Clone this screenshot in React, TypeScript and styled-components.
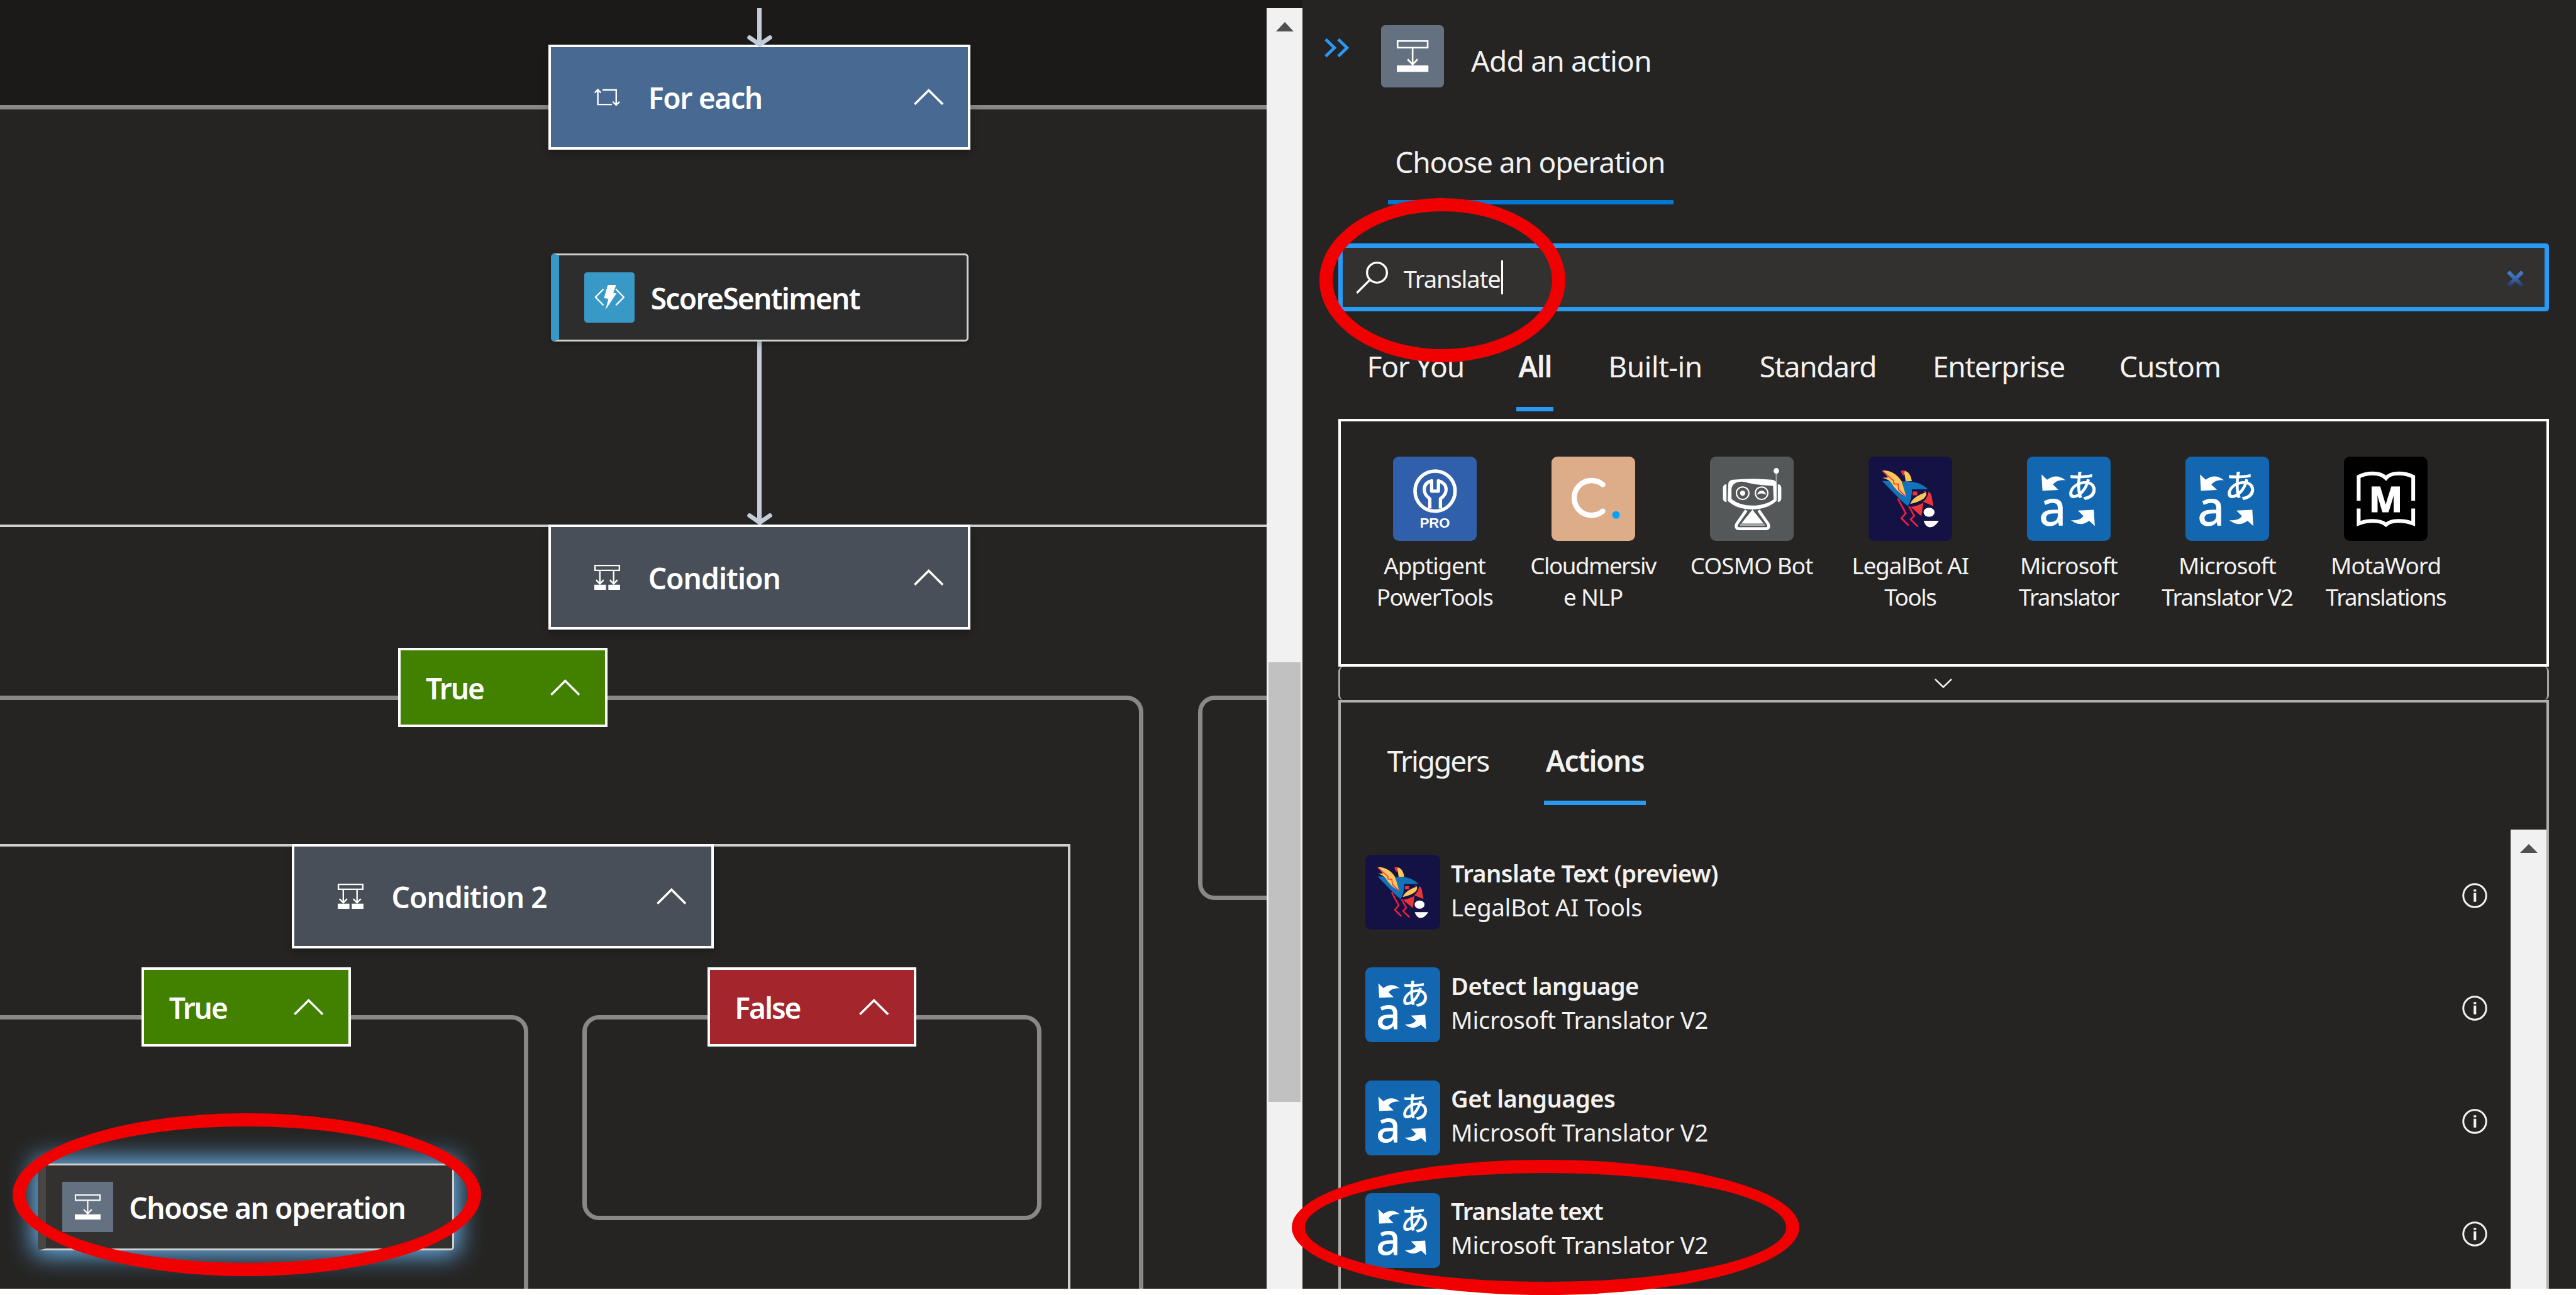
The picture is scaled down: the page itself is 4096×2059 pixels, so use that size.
import React from "react";
import styled, { createGlobalStyle, css } from "styled-components";

/* 1rem is one hundredth of the 4400-unit wide design grid. */
const GlobalStyle = createGlobalStyle`
  html { font-size: calc(100vw / 44); }
  body {
    margin: 0;
    background: #fff;
    overflow: hidden;
    color: #f3f2f1;
    font-family: "Noto Sans", "Open Sans", "Noto Sans CJK JP", sans-serif;
  }
  *, *::before, *::after { box-sizing: border-box; }
  svg { display: block; flex: none; overflow: visible; }
`;

const Page = styled.div`
  position: relative;
  width: 44rem;
  height: 22.12rem;
  overflow: hidden;
  background: #fff;
`;

const Workspace = styled.div`
  display: flex;
  height: 22.01rem;
`;

/* ---------- text ---------- */

const Label = styled.span<{ $track?: number; $bold?: boolean }>`
  display: block;
  margin-bottom: -0.022rem;
  padding-top: 0.022rem;
  white-space: pre;
  font-size: 0.495rem;
  line-height: 0.6rem;
  font-weight: ${(p) => (p.$bold ? 600 : 400)};
  letter-spacing: ${(p) => p.$track ?? -0.024}em;
`;

const SmallLabel = styled(Label)`
  margin-bottom: 0;
  padding-top: 0;
  font-size: 0.41rem;
  line-height: 0.58rem;
`;

/* ---------- designer canvas ---------- */

const Canvas = styled.main`
  position: relative;
  flex: none;
  width: 21.64rem;
  overflow: hidden;
  background: #1b1a19;
  color: #fff;
`;

type Box = { $x: number; $y: number; $w: number; $h: number };

const placed = css<Box>`
  position: absolute;
  left: ${(p) => p.$x}rem;
  top: ${(p) => p.$y}rem;
  width: ${(p) => p.$w}rem;
  height: ${(p) => p.$h}rem;
`;

const ScopeFrame = styled.div<Box & { $square?: boolean }>`
  ${placed}
  border: ${(p) => (p.$square ? "0.0435rem solid #d2d0ce" : "0.076rem solid #8a8886")};
  border-radius: ${(p) => (p.$square ? 0 : "0.28rem")};
  background: #252423;
`;

const EdgeLine = styled.div<Box>`
  ${placed}
  background: #c5ccd9;
`;

const ArrowHead = styled.svg<{ $x: number; $y: number }>`
  position: absolute;
  left: ${(p) => p.$x}rem;
  top: ${(p) => p.$y}rem;
  width: 0.43rem;
  height: 0.2rem;
`;

const ScopeCard = styled.section<Box & { $fill: string }>`
  ${placed}
  display: flex;
  align-items: center;
  padding: 0 0.42rem 0 0.735rem;
  border: 0.0435rem solid #fff;
  background: ${(p) => p.$fill};
  box-shadow: 0 0.06rem 0.12rem rgba(0, 0, 0, 0.25);
`;

const ScopeTitle = styled(Label)`
  flex: 1;
  padding-left: 0.482rem;
`;

const BranchCard = styled.section<Box & { $fill: string }>`
  ${placed}
  display: flex;
  align-items: center;
  justify-content: space-between;
  padding: 0 0.42rem 0 0.425rem;
  border: 0.0435rem solid #fff;
  background: ${(p) => p.$fill};
`;

const ActionCard = styled.section<Box & { $accent: string; $fill: string; $selected?: boolean }>`
  ${placed}
  display: flex;
  align-items: center;
  border: 0.033rem solid #d2d0ce;
  border-left: 0.14rem solid ${(p) => p.$accent};
  border-radius: 0.06rem;
  background: ${(p) => p.$fill};
  box-shadow: ${(p) => (p.$selected ? "0 0 0.42rem 0.07rem #6cb8f6" : "0 0.04rem 0.1rem rgba(0,0,0,0.25)")};
`;

const CardTile = styled.div<{ $fill: string; $gap: number; $radius?: number }>`
  display: flex;
  align-items: center;
  justify-content: center;
  flex: none;
  width: 0.862rem;
  height: 0.862rem;
  margin-left: ${(p) => p.$gap}rem;
  border-radius: ${(p) => p.$radius ?? 0}rem;
  background: ${(p) => p.$fill};
`;

const CardTitle = styled(Label)`
  padding-left: 0.275rem;
`;

/* ---------- scrollbars ---------- */

const CanvasScroll = styled.div`
  display: flex;
  flex-direction: column;
  flex: none;
  width: 0.61rem;
  border-top: 0.14rem solid #1b1a19;
  background: #f1f1f1;
`;

const ScrollArrow = styled.svg<{ $top: number; $h: number }>`
  width: 0.3rem;
  height: ${(p) => p.$h}rem;
  margin: ${(p) => p.$top}rem auto 0;
`;

const Thumb = styled.div`
  height: 7.506rem;
  margin: 10.77rem 0.04rem 0 0.03rem;
  background: #c1c1c1;
`;

const ListScroll = styled.div`
  flex: none;
  width: 0.605rem;
  background: #f1f1f1;
`;

/* ---------- side panel ---------- */

const Panel = styled.aside`
  display: flex;
  flex-direction: column;
  flex: 1;
  padding: 0 0.465rem 0 0.61rem;
  background: #252423;
`;

const PanelHeader = styled.header`
  display: flex;
  align-items: flex-start;
  height: 1.5rem;
  margin-left: -0.235rem;
`;

const CollapseIcon = styled.svg`
  width: 0.42rem;
  height: 0.32rem;
  margin-top: 0.66rem;
`;

const HeaderTile = styled.div`
  display: flex;
  align-items: center;
  justify-content: center;
  width: 1.078rem;
  height: 1.07rem;
  margin: 0.427rem 0 0 0.543rem;
  border-radius: 0.07rem;
  background: #647180;
`;

const PanelTitle = styled(Label)`
  margin: 0.72rem 0 0 0.464rem;
`;

const OperationTab = styled.div`
  width: 4.88rem;
  margin: 0.948rem 0 0 0.843rem;
  padding: 0 0 0.372rem 0.125rem;
  border-bottom: 0.08rem solid #0078d4;
`;

const SearchBox = styled.div`
  display: flex;
  align-items: center;
  height: 1.155rem;
  margin-top: 0.667rem;
  padding: 0 0.35rem 0 0.225rem;
  border: 0.08rem solid #2899f5;
  border-radius: 0.05rem;
  background: #323130;
`;

const SearchText = styled(SmallLabel)`
  padding: 0.03rem 0 0 0.263rem;
  font-size: 0.41rem;
`;

const Caret = styled.span`
  width: 0.033rem;
  height: 0.575rem;
  margin-left: 0.012rem;
  background: #fff;
`;

const ClearIcon = styled.svg`
  width: 0.29rem;
  height: 0.29rem;
  margin: 0.05rem 0 0 auto;
`;

const CategoryTabs = styled.nav`
  display: grid;
  grid-template-columns: 2.587rem 1.537rem 2.583rem 2.955rem 3.19rem auto;
  margin: 0.62rem 0 0 0.458rem;
`;

const Tab = styled.div<{ $active?: boolean; $drop: number }>`
  justify-self: start;
  padding: 0 0.03rem ${(p) => p.$drop}rem 0.03rem;
  border-bottom: 0.076rem solid ${(p) => (p.$active ? "#2899f5" : "transparent")};
`;

const Connectors = styled.div`
  display: grid;
  grid-template-columns: repeat(7, 2.708rem);
  align-content: start;
  height: 4.24rem;
  margin-top: 0.125rem;
  padding: 0.61rem 0 0 0.247rem;
  border: 0.0435rem solid #fff;
`;

const Connector = styled.div`
  display: flex;
  flex-direction: column;
  align-items: center;
`;

const ConnectorTile = styled.div<{ $fill: string; $size: number }>`
  flex: none;
  width: ${(p) => p.$size}rem;
  height: ${(p) => p.$size}rem;
  overflow: hidden;
  border-radius: 0.1rem;
  background: ${(p) => p.$fill};

  svg { width: 100%; height: 100%; }
`;

const ConnectorName = styled.div`
  margin-top: 0.143rem;
`;

const ConnectorLine = styled(Label)`
  font-size: 0.395rem;
  line-height: 0.535rem;
  text-align: center;
`;

const Expander = styled.div`
  display: flex;
  align-items: center;
  justify-content: center;
  height: 0.57rem;
  border: solid #a7a5a3;
  border-width: 0 0.033rem;
  border-radius: 0.08rem;
`;

const Operations = styled.section`
  display: flex;
  flex-direction: column;
  flex: 1;
  border: solid #b0aead;
  border-width: 0.0435rem 0.0435rem 0;
`;

const OperationTabs = styled.nav`
  display: grid;
  grid-template-columns: 2.708rem auto;
  margin: 0.67rem 0 0 0.763rem;
`;

const OperationBody = styled.div`
  display: flex;
  flex: 1;
  margin-top: 0.42rem;
`;

const OperationList = styled.div`
  flex: 1;
  padding: 0.112rem 0.4rem 0 0.422rem;
`;

const OperationRow = styled.div`
  display: flex;
  align-items: center;
  height: 1.925rem;
`;

const OperationText = styled.div`
  flex: 1;
  padding: 0 0 0.09rem 0.178rem;
`;

const InfoIcon = styled.svg`
  width: 0.43rem;
  height: 0.43rem;
  margin-top: 0.12rem;
`;

const Highlight = styled.div<Box>`
  ${placed}
  border: 0.23rem solid #f00000;
  border-radius: 50%;
  pointer-events: none;
`;

/* ---------- line icons ---------- */

const size = (w: number, h: number) => ({ viewBox: `0 0 ${w} ${h}`, style: { width: `${w / 100}rem`, height: `${h / 100}rem` } });

const ChevronUp = () => (
  <svg {...size(51, 28)} fill="none" stroke="#fff" strokeWidth="3.8">
    <path d="M1.5 26.5 25.5 2.8 49.5 26.5" />
  </svg>
);

const ChevronDown = () => (
  <svg {...size(30, 16)} fill="none" stroke="#f3f2f1" strokeWidth="2.8">
    <path d="M1 1 15 14.5 29 1" />
  </svg>
);

const LoopIcon = () => (
  <svg {...size(44, 29)} fill="none" stroke="#fff" strokeWidth="2.6">
    <path d="M14 2.2H37.4V27.5M30 27H6V2M.8 7 6 1.6 11.2 7M31.5 22.3 37.4 28 43 22.3" />
  </svg>
);

const ConditionIcon = () => (
  <svg {...size(44, 43)} fill="none" stroke="#fff" strokeWidth="2.5">
    <path d="M1.2 1.2H42.8V9.6H1.2ZM9.5 10V32M33 10V32M3 26 9.5 32.5 16 26M26.5 26 33 32.5 39.5 26" />
    <path d="M0 34H20V43H0ZM24 34H44V43H24Z" fill="#fff" stroke="none" />
  </svg>
);

const StepIcon = ({ large }: { large?: boolean }) => (
  <svg {...size(large ? 54 : 44, large ? 54 : 43)} viewBox="0 0 54 54" preserveAspectRatio="none" fill="none" stroke="#fff" strokeWidth="2.8">
    <path d="M1.3 1.3H52.7V12.7H1.3ZM27 13V41M18.5 32.5 27 41.5 35.5 32.5" />
    <path d="M0 43H54V54H0Z" fill="#fff" stroke="none" />
  </svg>
);

const FunctionIcon = () => (
  <svg {...size(86, 86)}>
    <path d="M32.7 28.7 19.2 42.5 32.7 56.3M54 28.7 67.6 42.5 54 56.3" fill="none" stroke="#fff" strokeWidth="2.4" />
    <path d="M40.3 21.4H54.6L49.5 34.8 55.2 36 36.2 64 41.3 45.2 33.7 44Z" fill="#fff" />
  </svg>
);

const SearchIcon = () => (
  <svg {...size(55, 55)} fill="none" stroke="#fff" strokeWidth="3.6">
    <circle cx="36" cy="18.8" r="17" />
    <path d="M24 31 1.5 53.5" />
  </svg>
);

const Arrow = ({ x, y }: { x: number; y: number }) => (
  <ArrowHead $x={x} $y={y} viewBox="0 0 43 20" fill="none" stroke="#c5ccd9" strokeWidth="7.5" strokeLinecap="round" strokeLinejoin="round">
    <path d="M4 4 21.5 16 39 4" />
  </ArrowHead>
);

const Info = () => (
  <InfoIcon viewBox="0 0 43 43" fill="none" stroke="#f3f2f1">
    <circle cx="21.5" cy="21.5" r="19.6" strokeWidth="3.2" />
    <path d="M21.8 16.8V32M21.8 11V14.4" strokeWidth="4.4" />
  </InfoIcon>
);

/* ---------- connector logos ---------- */

const ApptigentLogo = () => (
  <svg viewBox="0 0 142 142" fill="none" stroke="#fff">
    <circle cx="71.3" cy="58.5" r="34" strokeWidth="6" />
    <path
      strokeWidth="5.6"
      strokeLinejoin="round"
      d="M62.4 88V71.5C56 67 53 62 53 55.5 53 48 58 43 65.5 41V58.5H77V41C84.5 43 90 48 90 55.5 90 62 87 67 80.4 71.5V88"
    />
    <text x="71" y="121" textAnchor="middle" fontSize="23.5" fontWeight="700" fontFamily='"Liberation Sans", sans-serif' fill="#fff" stroke="none" textLength="51" lengthAdjust="spacingAndGlyphs">
      PRO
    </text>
  </svg>
);

const CloudmersiveLogo = () => (
  <svg viewBox="0 0 142 142">
    <path d="M87 47.5A29.5 29.5 0 1 0 87 92.5" fill="none" stroke="#fff" strokeWidth="9" strokeLinecap="round" />
    <circle cx="109.4" cy="99" r="6.4" fill="#00a2ff" />
  </svg>
);

const CosmoLogo = () => (
  <svg viewBox="0 0 142 142">
    <path d="M112.5 28V46" stroke="#a9abab" strokeWidth="2" />
    <ellipse cx="112.5" cy="24.3" rx="4.6" ry="5" fill="#fff" />
    <path d="M28 47C23.5 47 22 50 22 54V70C22 74 23.5 77 28 77ZM115 47C119.5 47 121 50 121 54V70C121 74 119.5 77 115 77Z" fill="#fff" />
    <path d="M31 48C31 42 34 40 39 39.3Q72 36 105 39.3C110 40 113 42 113 48V75Q98 89.5 72 89.5 45 89.5 30 75Z" fill="#fff" />
    <path d="M36.5 55C37 47 44 42.3 54 42.3 62 42.3 68 48 107 49.5L108 72.5Q94 83 72 83 50 83 36.5 72Z" fill="#555858" />
    <circle cx="55.4" cy="62" r="10.6" fill="none" stroke="#fff" strokeWidth="2.2" />
    <circle cx="55.4" cy="62" r="4.4" fill="#fff" />
    <circle cx="87.5" cy="62" r="10.6" fill="none" stroke="#fff" strokeWidth="2.2" />
    <path d="M80 64.5Q82 57.5 87.5 57.5 93 57.5 95 64.5 87.5 60.5 80 64.5Z" fill="#fff" />
    <path d="M61.5 91 45.5 114C43 120 45 122.3 50 122.3H94C99 122.3 101 120 98.5 114L82.5 91" fill="none" stroke="#fff" strokeWidth="5" />
    <path d="M72 90 91 113.5H53Z" fill="#fff" />
    <path d="M51 116H93" stroke="#fff" strokeWidth="1.5" />
  </svg>
);

const LegalBotLogo = () => (
  <svg viewBox="36 31 427 427">
    <path d="M106 155H152L214 232 210 158Q290 150 340 198H258Q256 262 235 283L200 252Z" fill="#1173ba" />
    <path d="M108 102Q168 100 206 158L229 238Q176 208 152 165 138 145 106 139L136 138Z" fill="#fdc75a" />
    <path d="M107 104 164 154 166 170 187 171 190 199 227 236" fill="none" stroke="#ee3344" strokeWidth="5.5" />
    <path d="M215 102Q250 106 257 156L226 157Q222 130 215 102Z" fill="#fcc850" />
    <path d="M202 102H222L215 129Q202 118 202 102Z" fill="#e8323a" />
    <path d="M262 209H285V228H262ZM318 204 330 210 324 216Z" fill="#ec343c" />
    <path d="M343 208Q355 218 358 232L367 284 314 261Q338 244 343 208ZM316 266 306 335 251 288Q284 284 316 266Z" fill="#ec353b" />
    <path d="M249 272Q262 236 330 212 340 252 249 272Z" fill="#fdc75a" />
    <path d="M186 245 226 320 204 345 241 382M242 284 269 333 251 352 288 388" fill="none" stroke="#f01c40" strokeWidth="9" />
    <ellipse cx="345" cy="315" rx="28" ry="23.5" fill="#fff" />
    <path d="M317 358H395Q374 391 350 391.5 329 391 317 358Z" fill="#fff" />
  </svg>
);

const TranslatorLogo = () => (
  <svg viewBox="849 31 427 427" fill="#fff">
    <path d="M923 122 952 149Q998 114 1045 151 1004 146 981 173L1010 201 928 205Z" />
    <path d="M1109 306 1190 302 1195 385 1166 358Q1120 393 1073 355 1120 360 1137 334Z" />
    <text x="911" y="381" fontSize="247" stroke="#fff" strokeWidth="3">
      a
    </text>
    <text x="1048" y="243" fontSize="166" fontWeight="500" fontFamily='"Noto Sans CJK JP", sans-serif'>
      あ
    </text>
  </svg>
);

const MotaWordLogo = () => (
  <svg viewBox="0 0 142 142">
    <path
      d="M25 75V34Q36 28.5 49 28.5 64 28.5 71.3 36.5 78 28.5 93 28.5 106 28.5 117.5 34V75M25 88V113.5Q36 109 49 109 64 109 71.3 115.5 78 109 93 109 106 109 117.5 113.5V88"
      fill="none"
      stroke="#fff"
      strokeWidth="6.4"
    />
    <text x="71" y="94" textAnchor="middle" fontSize="59" fontWeight="800" fill="#fff" stroke="#fff" strokeWidth="1" textLength="57" lengthAdjust="spacingAndGlyphs">
      M
    </text>
  </svg>
);

/* ---------- data ---------- */

type Line = [text: string, track: number];

const connectors: { fill: string; logo: React.ReactNode; lines: Line[] }[] = [
  { fill: "#305fab", logo: <ApptigentLogo />, lines: [["Apptigent", -0.028], ["PowerTools", -0.036]] },
  { fill: "#ddac88", logo: <CloudmersiveLogo />, lines: [["Cloudmersiv", -0.041], ["e NLP", -0.03]] },
  { fill: "#555858", logo: <CosmoLogo />, lines: [["COSMO Bot", -0.023]] },
  { fill: "#141244", logo: <LegalBotLogo />, lines: [["LegalBot AI", -0.03], ["Tools", -0.04]] },
  { fill: "#1267b0", logo: <TranslatorLogo />, lines: [["Microsoft", -0.024], ["Translator", -0.043]] },
  { fill: "#1267b0", logo: <TranslatorLogo />, lines: [["Microsoft", -0.024], ["Translator V2", -0.04]] },
  { fill: "#000", logo: <MotaWordLogo />, lines: [["MotaWord", -0.024], ["Translations", -0.042]] },
];

const categories: { name: string; track: number; active?: boolean }[] = [
  { name: "For You", track: -0.026 },
  { name: "All", track: -0.03, active: true },
  { name: "Built-in", track: -0.013 },
  { name: "Standard", track: -0.031 },
  { name: "Enterprise", track: -0.028 },
  { name: "Custom", track: -0.022 },
];

const operations: { title: Line; source: Line; fill: string; logo: React.ReactNode }[] = [
  { title: ["Translate Text (preview)", -0.017], source: ["LegalBot AI Tools", -0.0055], fill: "#141244", logo: <LegalBotLogo /> },
  { title: ["Detect language", -0.014], source: ["Microsoft Translator V2", -0.007], fill: "#1267b0", logo: <TranslatorLogo /> },
  { title: ["Get languages", -0.0145], source: ["Microsoft Translator V2", -0.007], fill: "#1267b0", logo: <TranslatorLogo /> },
  { title: ["Translate text", -0.0267], source: ["Microsoft Translator V2", -0.007], fill: "#1267b0", logo: <TranslatorLogo /> },
];

/* ---------- composition ---------- */

const Branch = ({ x, y, fill, name, track }: { x: number; y: number; fill: string; name: string; track: number }) => (
  <BranchCard $x={x} $y={y} $w={3.57} $h={1.355} $fill={fill}>
    <Label $bold $track={track}>
      {name}
    </Label>
    <ChevronUp />
  </BranchCard>
);

const Scope = ({ x, y, fill, name, track, icon }: { x: number; y: number; fill: string; name: string; track: number; icon: React.ReactNode }) => (
  <ScopeCard $x={x} $y={y} $w={7.205} $h={1.787} $fill={fill}>
    {icon}
    <ScopeTitle $bold $track={track}>
      {name}
    </ScopeTitle>
    <ChevronUp />
  </ScopeCard>
);

const Designer = () => (
  <Canvas>
    <ScopeFrame $x={-1} $y={1.795} $w={24} $h={22} />
    <ScopeFrame $square $x={-1} $y={8.963} $w={24} $h={15} />
    <ScopeFrame $x={-1} $y={11.883} $w={20.53} $h={12} />
    <ScopeFrame $x={20.46} $y={11.883} $w={4} $h={3.494} />
    <ScopeFrame $square $x={-1} $y={14.414} $w={19.285} $h={9} />
    <ScopeFrame $x={-1} $y={17.34} $w={10.018} $h={6} />
    <ScopeFrame $x={9.943} $y={17.34} $w={7.846} $h={3.496} />

    <EdgeLine $x={12.933} $y={0.145} $w={0.077} $h={0.6} />
    <EdgeLine $x={12.933} $y={5.83} $w={0.077} $h={3.08} />
    <Scope x={9.372} y={0.765} fill="#486991" name="For each" track={-0.0283} icon={<LoopIcon />} />
    <Scope x={9.372} y={8.963} fill="#484f58" name="Condition" track={-0.0202} icon={<ConditionIcon />} />
    <Scope x={4.987} y={14.414} fill="#484f58" name="Condition 2" track={-0.0193} icon={<ConditionIcon />} />
    <Arrow x={12.757} y={0.6} />
    <Arrow x={12.757} y={8.767} />

    <ActionCard $x={9.408} $y={4.33} $w={7.132} $h={1.5} $accent="#3999c6" $fill="#2d2d2d">
      <CardTile $fill="#3999c6" $gap={0.43} $radius={0.05}>
        <FunctionIcon />
      </CardTile>
      <CardTitle $bold $track={-0.0366}>
        ScoreSentiment
      </CardTitle>
    </ActionCard>

    <Branch x={6.805} y={11.063} fill="#428000" name="True" track={-0.045} />
    <Branch x={2.42} y={16.522} fill="#428000" name="True" track={-0.045} />
    <Branch x={12.082} y={16.522} fill="#a4262c" name="False" track={-0.0443} />

    <ActionCard $x={0.644} $y={19.873} $w={7.117} $h={1.481} $accent="#484644" $fill="#323130" $selected>
      <CardTile $fill="#647180" $gap={0.285}>
        <StepIcon />
      </CardTile>
      <CardTitle $bold $track={-0.03}>
        Choose an operation
      </CardTitle>
    </ActionCard>
  </Canvas>
);

const ActionPanel = () => (
  <Panel>
    <PanelHeader>
      <CollapseIcon viewBox="0 0 42 32" fill="none" stroke="#2899f5" strokeWidth="5.2">
        <path d="M2 1.5 17 16 2 30.5M23.5 1.5 38.5 16 23.5 30.5" />
      </CollapseIcon>
      <HeaderTile>
        <StepIcon large />
      </HeaderTile>
      <PanelTitle $track={-0.018}>Add an action</PanelTitle>
    </PanelHeader>
    <OperationTab>
      <Label $track={-0.0245}>Choose an operation</Label>
    </OperationTab>
    <SearchBox>
      <SearchIcon />
      <SearchText $track={-0.0293}>Translate</SearchText>
      <Caret />
      <ClearIcon viewBox="0 0 29 29">
        <defs>
          <linearGradient id="clear" gradientUnits="userSpaceOnUse" x1="0" y1="0" x2="0" y2="29">
            <stop offset="0" stopColor="#4584cf" />
            <stop offset="0.5" stopColor="#3c63ad" />
            <stop offset="1" stopColor="#1b3561" />
          </linearGradient>
        </defs>
        <path d="M2.5 2.5 26.5 26.5M26.5 2.5 2.5 26.5" stroke="url(#clear)" strokeWidth="6.5" />
      </ClearIcon>
    </SearchBox>
    <CategoryTabs>
      {categories.map((c) => (
        <Tab key={c.name} $active={c.active} $drop={0.414}>
          <Label $bold={c.active} $track={c.track}>
            {c.name}
          </Label>
        </Tab>
      ))}
    </CategoryTabs>
    <Connectors>
      {connectors.map((c, i) => (
        <Connector key={i}>
          <ConnectorTile $fill={c.fill} $size={1.43}>
            {c.logo}
          </ConnectorTile>
          <ConnectorName>
            {c.lines.map(([text, track]) => (
              <ConnectorLine key={text} $track={track}>
                {text}
              </ConnectorLine>
            ))}
          </ConnectorName>
        </Connector>
      ))}
    </Connectors>
    <Expander>
      <ChevronDown />
    </Expander>
    <Operations>
      <OperationTabs>
        <Tab $drop={0.397}>
          <Label $track={-0.0454}>Triggers</Label>
        </Tab>
        <Tab $active $drop={0.397}>
          <Label $bold $track={-0.0307}>
            Actions
          </Label>
        </Tab>
      </OperationTabs>
      <OperationBody>
        <OperationList>
          {operations.map((o) => (
            <OperationRow key={o.title[0]}>
              <ConnectorTile $fill={o.fill} $size={1.28}>
                {o.logo}
              </ConnectorTile>
              <OperationText>
                <SmallLabel $bold $track={o.title[1]}>
                  {o.title[0]}
                </SmallLabel>
                <SmallLabel $track={o.source[1]}>{o.source[0]}</SmallLabel>
              </OperationText>
              <Info />
            </OperationRow>
          ))}
        </OperationList>
        <ListScroll>
          <ScrollArrow $top={0.25} $h={0.15} viewBox="0 0 30 15">
            <path d="M0 15 15 0 30 15Z" fill="#505050" />
          </ScrollArrow>
        </ListScroll>
      </OperationBody>
    </Operations>
  </Panel>
);

export default function App() {
  return (
    <Page>
      <GlobalStyle />
      <Workspace>
        <Designer />
        <CanvasScroll>
          <ScrollArrow $top={0.24} $h={0.16} viewBox="0 0 30 16">
            <path d="M0 16 15 0 30 16Z" fill="#505050" />
          </ScrollArrow>
          <Thumb />
        </CanvasScroll>
        <ActionPanel />
      </Workspace>
      <Highlight $x={0.217} $y={19.018} $w={8.003} $h={2.782} />
      <Highlight $x={22.542} $y={3.388} $w={4.197} $h={2.796} />
      <Highlight $x={22.069} $y={19.805} $w={8.668} $h={2.315} />
    </Page>
  );
}
